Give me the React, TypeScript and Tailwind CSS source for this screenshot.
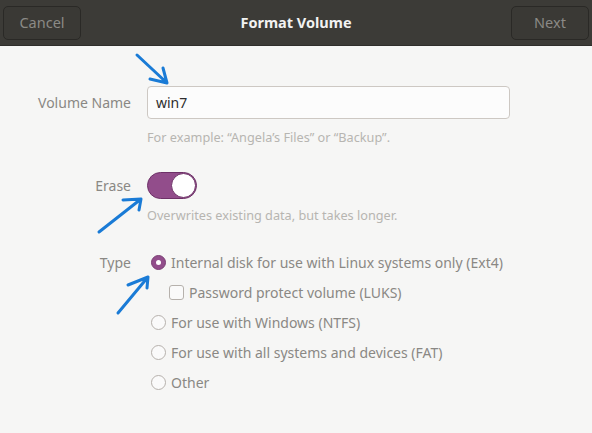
import React from "react";

const font = { fontFamily: '"Noto Sans", "Open Sans", sans-serif' };

function Radio({ checked }: { checked?: boolean }) {
  if (checked) {
    return (
      <span className="flex h-[15px] w-[15px] items-center justify-center rounded-full bg-[#924d8b] border border-[#7a3f73]">
        <span className="h-[5px] w-[5px] rounded-full bg-white" />
      </span>
    );
  }
  return <span className="h-[15px] w-[15px] rounded-full border border-[#b6b1ac] bg-[#fafafa]" />;
}

function Option({ label, checked }: { label: string; checked?: boolean }) {
  return (
    <div className="flex h-[30px] items-center gap-[5px] pl-[4px]">
      <Radio checked={checked} />
      <span className="text-[14px] text-[#8a8884]">{label}</span>
    </div>
  );
}

export default function App() {
  return (
    <div className="relative h-[433px] w-[592px] overflow-hidden bg-[#f6f6f5]" style={font}>
      <div className="flex h-[46px] items-center justify-between border-b border-[#2f2e2b] bg-[#3c3b37] px-[3px]">
        <button className="h-[34px] w-[78px] rounded-[5px] border border-[#2a2926] bg-[#3a3935] text-[14.5px] text-[#8b8a86]">
          Cancel
        </button>
        <div className="text-[14.5px] font-bold text-[#f2f2f2]">Format Volume</div>
        <button className="h-[34px] w-[78px] rounded-[5px] border border-[#2a2926] bg-[#3a3935] text-[14.5px] text-[#8b8a86]">
          Next
        </button>
      </div>

      <div className="grid grid-cols-[131px_1fr] gap-x-[16px] pt-[40px]">
        <div className="flex h-[33px] items-center justify-end text-[14px] text-[#8a8884]">Volume Name</div>
        <div>
          <div className="flex h-[33px] w-[363px] items-center rounded-[4px] border border-[#cdc8c3] bg-[#fcfcfc] px-[8px] text-[14px] text-[#2e2e2e]">
            win7
          </div>
          <div className="mt-[9px] h-[18px] text-[12.7px] leading-[18px] text-[#b7b5b1]">
            For example: “Angela’s Files” or “Backup”.
          </div>
        </div>

        <div className="mt-[26px] flex h-[27px] items-center justify-end text-[14px] text-[#8a8884]">Erase</div>
        <div className="mt-[26px]">
          <div className="flex h-[27px] w-[50px] items-center justify-end rounded-full border border-[#6e3168] bg-[#924d8b]">
            <span className="h-[25px] w-[25px] rounded-full border border-[#6e3168] bg-white" />
          </div>
          <div className="mt-[7px] h-[18px] text-[12.7px] leading-[18px] text-[#b7b5b1]">
            Overwrites existing data, but takes longer.
          </div>
        </div>

        <div className="mt-[23px] flex h-[30px] items-center justify-end text-[14px] text-[#8a8884]">Type</div>
        <div className="mt-[23px]">
          <Option label="Internal disk for use with Linux systems only (Ext4)" checked />
          <div className="flex h-[30px] items-center gap-[5px] pl-[22px]">
            <span className="h-[15px] w-[15px] rounded-[3px] border border-[#b6b1ac] bg-[#fafafa]" />
            <span className="text-[14px] text-[#8a8884]">Password protect volume (LUKS)</span>
          </div>
          <Option label="For use with Windows (NTFS)" />
          <Option label="For use with all systems and devices (FAT)" />
          <div className="h-[29px]">
            <Option label="Other" />
          </div>
        </div>
      </div>

      <svg className="pointer-events-none absolute left-0 top-0" width="592" height="433" viewBox="0 0 592 433">
        <g stroke="#1a7bd6" strokeWidth="3" strokeLinecap="round" strokeLinejoin="round" fill="none">
          <path d="M137 55 L167 83 M150 79 L167 83 L163 68" />
          <path d="M99 232 L141 199 M123 200 L141 199 L139 210" />
          <path d="M118 313 L148 277 M128 285 L148 277 L147 288" />
        </g>
      </svg>
    </div>
  );
}
